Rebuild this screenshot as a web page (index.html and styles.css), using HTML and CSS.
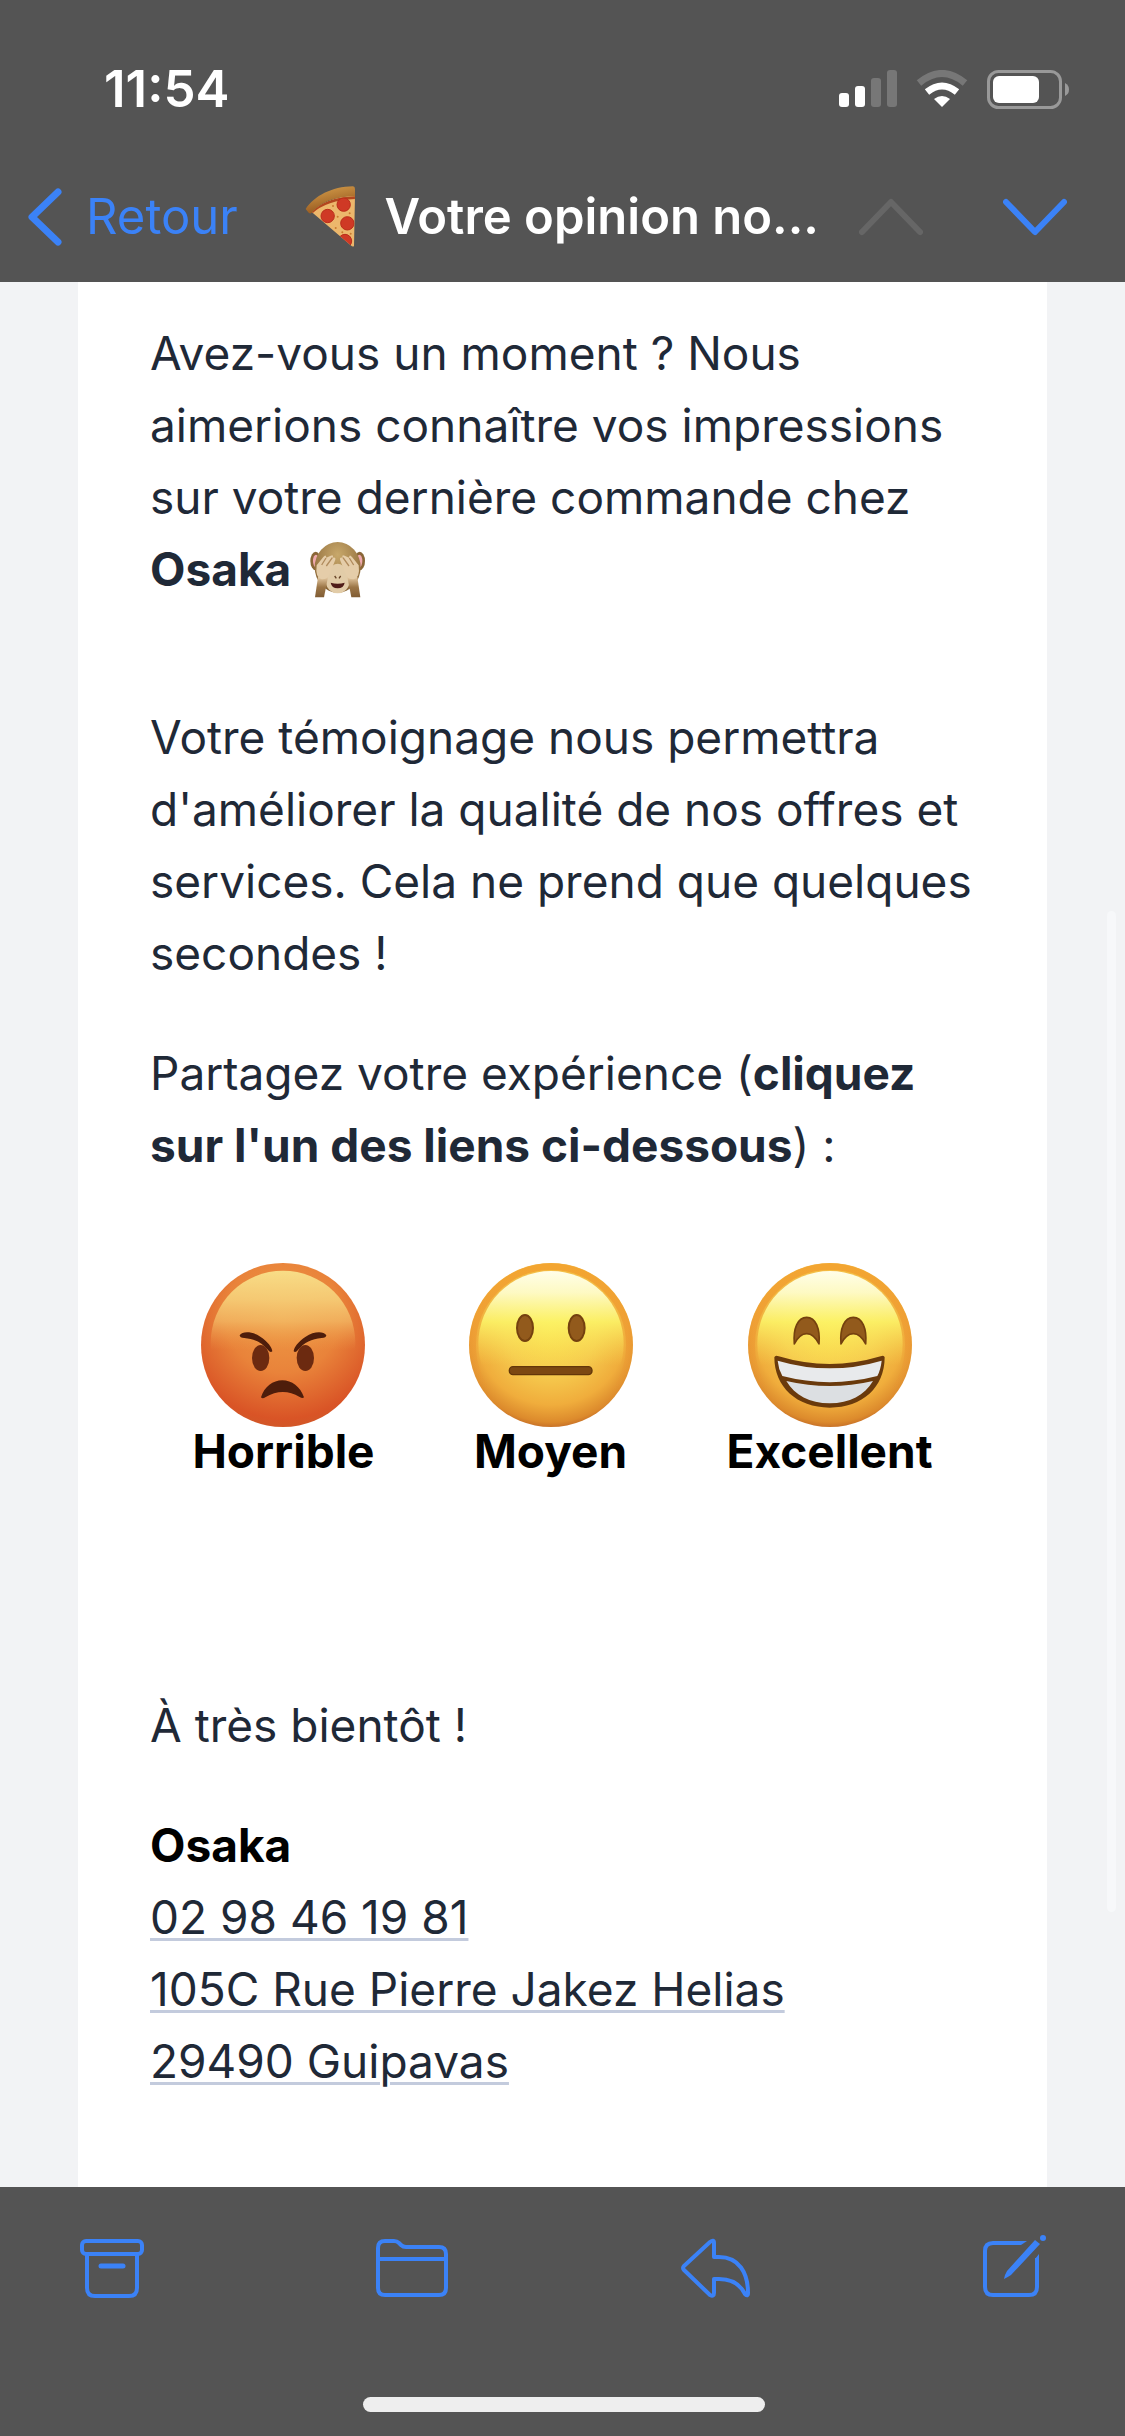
FILE: index.html
```html
<!DOCTYPE html>
<html lang="fr">
<head>
  <meta charset="UTF-8" />
  <meta name="viewport" content="width=device-width, initial-scale=1.0"/>
  <title>Votre opinion</title>
  <link rel="stylesheet" href="styles.css">
</head>
<body>
  <header class="header">
    <div class="status">
      <span class="time">11:54</span>
      <div class="status-icons">
        <svg width="58" height="38" viewBox="0 0 58 38" fill="#fff">
          <rect x="0" y="23" width="10" height="14" rx="3"/>
          <rect x="16" y="16" width="10" height="21" rx="3"/>
          <rect x="32" y="8" width="10" height="29" rx="3" fill="#777"/>
          <rect x="48" y="0" width="10" height="37" rx="3" fill="#777"/>
        </svg>
        <svg width="52" height="38" viewBox="0 0 52 38">
          <path d="M3 13Q26-6 49 13" fill="none" stroke="#777" stroke-width="7"/>
          <path d="M11 22Q26 10 41 22" fill="none" stroke="#fff" stroke-width="7"/>
          <path d="M18 29Q26 23 34 29L26 37z" fill="#fff"/>
        </svg>
        <svg width="82" height="39" viewBox="0 0 82 39">
          <rect x="1.5" y="1.5" width="72" height="36" rx="10" fill="none" stroke="#999" stroke-width="3"/>
          <rect x="6" y="6" width="46" height="27" rx="6" fill="#fff"/>
          <path d="M78 13q4 2 4 6.500t-4 6.500z" fill="#999"/>
        </svg>
      </div>
    </div>
    <nav class="nav">
      <button class="btn back">
        <svg width="34" height="58" viewBox="0 0 34 58"><path d="M30 4 4 29l26 25" stroke-width="7"/></svg>
        Retour
      </button>
      <h1 class="title">
        <svg width="51" height="62" viewBox="0 0 153 186">
          <defs>
            <linearGradient id="crust" x1="0" y1="0" x2="0.4" y2="1">
              <stop offset="0" stop-color="#dba44f"/>
              <stop offset="1" stop-color="#93551c"/>
            </linearGradient>
            <clipPath id="slice"><path d="M20 78Q64 34 150 28L147 180Q144 184 137 178z"/></clipPath>
          </defs>
          <path d="M20 78Q64 34 150 28L147 180Q144 184 137 178z" fill="#ecb76c"/>
          <g clip-path="url(#slice)">
            <path d="M18 80Q64 38 152 35" fill="none" stroke="#b2461e" stroke-width="8"/>
            <g fill="#cf3925" stroke="#b92d1a" stroke-width="3">
              <circle cx="116" cy="56" r="20"/>
              <circle cx="68" cy="90" r="20"/>
              <circle cx="127" cy="112" r="20"/>
              <circle cx="120" cy="165" r="20"/>
            </g>
            <g fill="#c8792f">
              <circle cx="84" cy="60" r="3"/><circle cx="98" cy="92" r="3"/><circle cx="134" cy="82" r="3"/>
              <circle cx="92" cy="126" r="3"/><circle cx="112" cy="139" r="3"/><circle cx="137" cy="143" r="3"/>
            </g>
          </g>
          <path d="M2 69C28 30 80 2 144 1q6 1 6 8v22Q62 30 18 82q-4 1-7-2z" fill="url(#crust)"/>
        </svg>
        <span>Votre opinion no...</span>
      </h1>
      <button class="btn up" aria-label="Message précédent" disabled>
        <svg width="64" height="38" viewBox="0 0 64 38"><path d="M3 34 32 4l29 30"/></svg>
      </button>
      <button class="btn" aria-label="Message suivant">
        <svg width="64" height="38" viewBox="0 0 64 38"><path d="M3 4l29 30L61 4"/></svg>
      </button>
    </nav>
  </header>

  <main class="mail">
    <article class="card">
      <p>Avez-vous un moment ? Nous aimerions connaître vos impressions sur votre dernière commande chez <strong>Osaka</strong>
        <svg class="monkey" width="56" height="56" viewBox="0 0 168 168">
          <defs>
            <radialGradient id="fur" cx="0.5" cy="0.25" r="0.7">
              <stop offset="0" stop-color="#c8a86b"/>
              <stop offset="1" stop-color="#8a6637"/>
            </radialGradient>
            <linearGradient id="arm" x1="0" y1="0" x2="0" y2="1">
              <stop offset="0" stop-color="#e6cba4"/>
              <stop offset="0.5" stop-color="#9c7647"/>
              <stop offset="1" stop-color="#805c34"/>
            </linearGradient>
          </defs>
          <ellipse cx="17" cy="57" rx="16" ry="28" fill="#8a6637"/>
          <ellipse cx="149" cy="57" rx="16" ry="28" fill="#8a6637"/>
          <ellipse cx="18" cy="57" rx="9" ry="19" fill="#efa9ae"/>
          <ellipse cx="148" cy="57" rx="9" ry="19" fill="#efa9ae"/>
          <ellipse cx="83" cy="76" rx="69" ry="76" fill="url(#fur)"/>
          <path d="M66 72q17-14 34 0l20 48q-8 34-37 34t-37-34z" fill="#e2cca8"/>
          <path d="M62 122q21 6 42 0-3 17-21 17t-21-17z" fill="#501c18"/>
          <path d="M74 102l5 7M92 102l-5 7" stroke="#654226" stroke-width="4"/>
          <path d="M24 105h30l-12 61H15z" fill="url(#arm)"/>
          <path d="M142 105h-30l12 61h27z" fill="url(#arm)"/>
          <path d="M20 70L40 45q8-10 9 2l13-6q10-5 6 6 10-3 8 6L58 99q-7 14-23 13-20-4-15-42z" fill="#e5cda9"/>
          <path d="M146 70L126 45q-8-10-9 2l-13-6q-10-5-6 6-10-3-8 6l18 46q7 14 23 13 20-4 15-42z" fill="#e5cda9"/>
          <path d="M48 48L35 69M67 47L49 72M118 48l13 21M99 47l18 25" fill="none" stroke="#b18b5d" stroke-width="4"/>
        </svg>
      </p>
      <p class="request">Votre témoignage nous permettra d'améliorer la qualité de nos offres et services. Cela ne prend que quelques secondes !</p>
      <p>Partagez votre expérience (<strong>cliquez sur l'un des liens ci-dessous</strong>) :</p>

      <div class="ratings">
        <a class="rating" href="#horrible">
          <svg width="164" height="164" viewBox="67 69 492 492">
            <defs>
              <radialGradient id="angry" cx="0.5" cy="0.32" r="0.7">
                <stop offset="0" stop-color="#ee9a46"/>
                <stop offset="0.5" stop-color="#e9833a"/>
                <stop offset="0.9" stop-color="#d95426"/>
                <stop offset="1" stop-color="#cf5828"/>
              </radialGradient>
              <linearGradient id="angry-shine" x1="0" y1="0" x2="0" y2="1">
                <stop offset="0" stop-color="#f8dd87"/>
                <stop offset="0.2" stop-color="#f6cf78" stop-opacity="0.9"/>
                <stop offset="0.35" stop-color="#f4bf69" stop-opacity="0.7"/>
                <stop offset="0.55" stop-color="#ee9a46" stop-opacity="0"/>
              </linearGradient>
            </defs>
            <circle cx="313" cy="315" r="246" fill="url(#angry)"/>
            <circle cx="313" cy="309" r="217" fill="url(#angry-shine)"/>
            <g fill="#6c2a10">
              <ellipse cx="246" cy="354" rx="26" ry="39"/>
              <ellipse cx="380" cy="354" rx="26" ry="39"/>
            </g>
            <g fill="#4e1d0b">
              <path d="M183 286c8-13 38-12 62 4 22 14 35 32 36 44-4 4-8 2-12-3-21-25-41-33-72-37-9 0-14-3-14-8z"/>
              <path d="M443 286c-8-13-38-12-62 4-22 14-35 32-36 44 4 4 8 2 12-3 21-25 41-33 72-37 9 0 14-3 14-8z"/>
              <path d="M247 472c10-32 36-51 64-51s54 19 65 51c-3 4-8 2-13-1-34-20-68-20-103 1-5 3-10 4-13 0z"/>
            </g>
          </svg>
          Horrible
        </a>
        <a class="rating" href="#moyen">
          <svg width="164" height="164" viewBox="55 69 492 492">
            <defs>
              <radialGradient id="face" cx="0.5" cy="0.4" r="0.62">
                <stop offset="0" stop-color="#fbe250"/>
                <stop offset="0.45" stop-color="#f6cb4e"/>
                <stop offset="0.75" stop-color="#f0ad3c"/>
                <stop offset="0.92" stop-color="#dc8a2c"/>
                <stop offset="1" stop-color="#bc6325"/>
              </radialGradient>
              <linearGradient id="rim" x1="0" y1="0" x2="0" y2="1">
                <stop offset="0" stop-color="#f3a531"/>
                <stop offset="0.5" stop-color="#ec9330" stop-opacity="0.5"/>
                <stop offset="0.8" stop-color="#ec9330" stop-opacity="0"/>
              </linearGradient>
              <linearGradient id="shine" x1="0" y1="0" x2="0" y2="1">
                <stop offset="0" stop-color="#fffee9"/>
                <stop offset="0.15" stop-color="#fefcc9" stop-opacity="0.95"/>
                <stop offset="0.35" stop-color="#fcf568" stop-opacity="0.85"/>
                <stop offset="0.65" stop-color="#f9dc52" stop-opacity="0"/>
              </linearGradient>
            </defs>
            <circle cx="301" cy="315" r="246" fill="url(#face)"/>
            <circle cx="301" cy="315" r="235" fill="none" stroke="url(#rim)" stroke-width="20"/>
            <circle cx="301" cy="311" r="218" fill="url(#shine)"/>
            <g fill="#925a1c" stroke="#74410f" stroke-width="6">
              <ellipse cx="223" cy="264" rx="24" ry="39"/>
              <ellipse cx="378" cy="264" rx="24" ry="39"/>
            </g>
            <rect x="176" y="380" width="248" height="24" rx="11" fill="#7c4812" stroke="#633609" stroke-width="4"/>
          </svg>
          Moyen
        </a>
        <a class="rating" href="#excellent">
          <svg width="164" height="164" viewBox="102 69 492 492">
            <circle cx="348" cy="315" r="246" fill="url(#face)"/>
            <circle cx="348" cy="315" r="235" fill="none" stroke="url(#rim)" stroke-width="20"/>
            <circle cx="348" cy="311" r="218" fill="url(#shine)"/>
            <g fill="#925a1c" stroke="#74410f" stroke-width="5" stroke-linejoin="round">
              <path d="M241 312c-4-46 10-80 37-80s41 34 37 80c-10-20-23-31-37-31s-27 11-37 31z"/>
              <path d="M381 312c-4-46 10-80 37-80s41 34 37 80c-10-20-23-31-37-31s-27 11-37 31z"/>
            </g>
            <path d="M181 352q3-8 13-3 153 46 306 0 10-5 12 3c0 90-66 151-165 151S181 440 181 352z" fill="#6a3a0c"/>
            <path d="M191 362q157 46 312 0-3 27-13 46-143 37-285 0-12-22-14-46z" fill="#e8eaec"/>
            <path d="M217 423q131 30 260 0c-25 42-70 67-130 67s-105-25-130-67z" fill="#dcdfe2"/>
          </svg>
          Excellent
        </a>
      </div>

      <p>À très bientôt !</p>
      <address class="contact">
        <strong>Osaka</strong>
        <a href="tel:+33298461981">02 98 46 19 81</a>
        <a href="#plan">105C Rue Pierre Jakez Helias<br>29490 Guipavas</a>
      </address>
    </article>
    <div class="scrollbar"></div>
  </main>

  <footer class="footer">
    <div class="toolbar">
      <button class="btn" aria-label="Archiver">
        <svg width="64" height="64" viewBox="0 -5 64 64">
          <rect x="2" y="2" width="60" height="13" rx="4"/>
          <path d="M7 16v33q0 8 8 8h34q8 0 8-8V16"/>
          <path d="M21 27h22" stroke-width="5"/>
        </svg>
      </button>
      <button class="btn" aria-label="Déplacer">
        <svg width="72" height="64" viewBox="0 -5 72 64">
          <path d="M2 49V9q0-7 7-7h9q3 0 5 2l2 2q2 2 5 2h33q7 0 7 7v34q0 7-7 7H9q-7 0-7-7zM2 20h68"/>
        </svg>
      </button>
      <button class="btn" aria-label="Répondre">
        <svg width="70" height="64" viewBox="0 -5 70 64">
          <path d="M29 3 3 27q-2 2 0 4l26 25q4 2 4-2V40h5c14 0 22 7 26 15q3 3 3-1C67 34 58 18 38 18h-5V4q0-4-4-1z"/>
        </svg>
      </button>
      <button class="btn" aria-label="Nouveau message">
        <svg width="64" height="64" viewBox="0 0 64 64">
          <path d="M38 9H10q-8 0-8 8v36q0 8 8 8h36q8 0 8-8V24" stroke-linecap="butt"/>
          <path d="M52 6l5 4-29 31q-3 2-7 4 1-5 3-8zM38 11V7h6zM52 27v-2l4-5v7z" fill="#3b82f7" stroke="none"/>
          <circle cx="60" cy="4" r="3" fill="#3b82f7" stroke="none"/>
        </svg>
      </button>
    </div>
    <div class="home-bar"></div>
  </footer>
</body>
</html>
```

FILE: styles.css
```css
* {
  box-sizing: border-box;
}

body {
  font-family: Inter, "Liberation Sans", sans-serif;
  font-size: 46px;
  line-height: 72px;
  background: #f2f3f5;
  color: #1f2937;
  display: flex;
  flex-direction: column;
  min-height: 100vh;
  margin: 0;
}

.header,
.footer {
  background: #545454;
  color: #fff;
}

.status {
  display: flex;
  justify-content: space-between;
  align-items: center;
  padding: 53px 56px 0 104px;
}

.time {
  font-size: 51px;
  font-weight: 600;
}

.status-icons {
  display: flex;
  align-items: center;
  gap: 19px;
}

.nav {
  display: flex;
  align-items: center;
  padding: 46px 58px 20px 28px;
  height: 157px;
}

.btn {
  display: flex;
  align-items: center;
  padding: 0;
  border: none;
  background: none;
  color: #3b82f7;
  font: inherit;
  cursor: pointer;
}

.btn svg {
  fill: none;
  stroke: currentColor;
  stroke-width: 4;
  stroke-linecap: round;
  stroke-linejoin: round;
}

.nav .btn svg {
  stroke-width: 6;
}

.nav .back {
  font-size: 49px;
  gap: 24px;
}

.title {
  flex: 1;
  display: flex;
  justify-content: flex-end;
  align-items: center;
  gap: 28px;
  margin: 0 40px 0 0;
  font-size: 49px;
  font-weight: 600;
  white-space: nowrap;
}

.nav .up {
  color: #666;
  margin-right: 80px;
}

.mail {
  flex: 1;
  position: relative;
  padding: 0 78px;
}

.card {
  background: #fff;
  min-height: 100%;
  padding: 35px 72px 90px;
}

.card p {
  margin: 0 0 48px;
}

.card .request {
  margin-top: 96px;
}

.monkey {
  margin-left: 6px;
  vertical-align: -12px;
}

.ratings {
  display: flex;
  justify-content: center;
  gap: 94px;
  padding: 34px 0 214px;
}

.rating {
  display: flex;
  flex-direction: column;
  align-items: center;
  color: #000;
  font-weight: 700;
  line-height: 48px;
  text-decoration: none;
}

.contact {
  display: flex;
  flex-direction: column;
  align-items: flex-start;
  font-style: normal;
}

.contact strong {
  color: #000;
}

.contact a {
  color: #1f2937;
  text-decoration-color: #c3cbdd;
  text-decoration-thickness: 3px;
  text-underline-offset: 4px;
}

strong {
  font-weight: 700;
}

.scrollbar {
  position: absolute;
  top: 33%;
  right: 9px;
  width: 9px;
  height: 1001px;
  border-radius: 5px;
  background: #f7f8fa;
}

.footer {
  padding: 47px 78px 24px 80px;
}

.toolbar {
  display: flex;
  justify-content: space-between;
}

.home-bar {
  width: 402px;
  height: 15px;
  margin: 99px auto 0;
  border-radius: 8px;
  background: #eee;
}
```
